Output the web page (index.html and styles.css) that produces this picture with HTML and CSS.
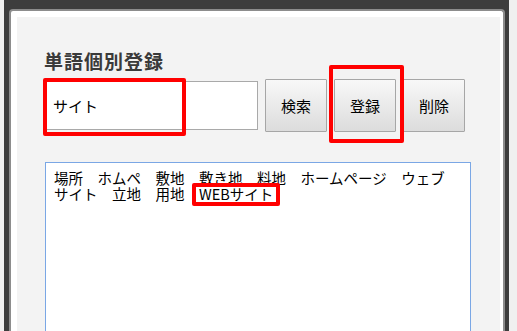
FILE: index.html
```html
<!DOCTYPE html>
<html lang="ja">
<head>
  <meta charset="UTF-8" />
  <title>単語個別登録</title>
  <link rel="stylesheet" href="styles.css">
</head>
<body>
  <div class="frame">
    <div class="window">
      <div class="panel">
        <h2 class="title">単語個別登録</h2>

        <div class="word-row">
          <div class="field marked">
            <input type="text" class="word-input" value="サイト" />
          </div>
          <button class="btn">検索</button>
          <div class="btn-wrap marked-btn">
            <button class="btn">登録</button>
          </div>
          <button class="btn">削除</button>
        </div>

        <div class="words">場所　ホムペ　敷地　敷き地　料地　ホームページ　ウェブサイト　立地　用地　<span class="mark">WEBサイト</span></div>
      </div>
    </div>
  </div>
</body>
</html>
```

FILE: styles.css
```css
body {
  margin: 0;
  background: #f0f0f0;
  font-family: "Noto Sans CJK JP", "Noto Sans", sans-serif;
}
.frame {
  margin-left: 4px;
  width: 505px;
  height: 331px;
  box-sizing: border-box;
  background: #3d3d3d;
  padding: 9px 4px 0 5px;
  overflow: hidden;
}
.window {
  height: 100%;
  box-sizing: border-box;
  background: #fff;
  border: 2px solid #8c8c8c;
  border-bottom: none;
  border-radius: 4px 4px 0 0;
  padding: 6px 3px 0 6px;
}
.panel {
  height: 100%;
  box-sizing: border-box;
  background: #f3f3f3;
  padding: 32px 0 0 27px;
}
.title {
  margin: 0 0 6px;
  font-size: 19px;
  line-height: 24px;
  letter-spacing: 1px;
  font-weight: bold;
  color: #3a3a3a;
}
.word-row {
  display: flex;
  align-items: center;
  gap: 7px;
  height: 53px;
}
.field {
  position: relative;
}
.word-input {
  display: block;
  width: 214px;
  height: 49px;
  box-sizing: border-box;
  margin: 0;
  border: 1px solid #a9a9a9;
  background: #fff;
  padding: 0 8px;
  font-family: inherit;
  font-size: 15px;
  color: #000;
  outline: none;
}
.btn {
  display: block;
  width: 62px;
  height: 53px;
  margin: 0;
  padding: 0;
  border: 1px solid #a6a6a6;
  border-radius: 1px;
  background: linear-gradient(#f8f8f8, #dcdcdc);
  font-family: inherit;
  font-size: 15px;
  color: #000;
  cursor: pointer;
}
.btn-wrap {
  position: relative;
}
.marked::after,
.marked-btn::after,
.mark::after {
  content: "";
  position: absolute;
  border: 4px solid #ff0000;
  border-radius: 2px;
  pointer-events: none;
}
.marked::after {
  left: -1px;
  top: -3px;
  width: 135px;
  height: 50px;
}
.marked-btn::after {
  left: -5px;
  top: -14px;
  right: -8px;
  bottom: -11px;
}
.words {
  margin: 30px 0 0 1px;
  width: 426px;
  height: 200px;
  box-sizing: border-box;
  background: #fff;
  border: 1px solid #7aa7e5;
  padding: 7px 16px 0 8px;
  font-size: 14.5px;
  line-height: 16px;
  color: #000;
}
.mark {
  position: relative;
}
.mark::after {
  left: -7px;
  right: -7px;
  top: 0;
  bottom: -2px;
}
```
